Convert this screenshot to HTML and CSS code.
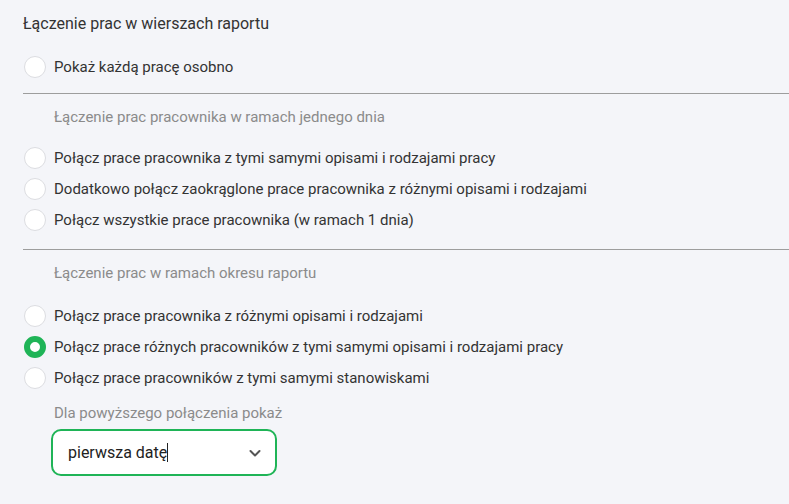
FILE: index.html
```html
<!DOCTYPE html>
<html lang="pl">
<head>
<meta charset="utf-8">
<title>Łączenie prac</title>
<link rel="stylesheet" href="styles.css">
</head>
<body>
<div class="panel">
  <div class="title">Łączenie prac w wierszach raportu</div>

  <label class="option first">
    <span class="radio"></span>
    <span class="label">Pokaż każdą pracę osobno</span>
  </label>

  <hr class="divider d1">
  <div class="subhead s1">Łączenie prac pracownika w ramach jednego dnia</div>
  <div class="group g1">
    <label class="option"><span class="radio"></span><span class="label">Połącz prace pracownika z tymi samymi opisami i rodzajami pracy</span></label>
    <label class="option"><span class="radio"></span><span class="label">Dodatkowo połącz zaokrąglone prace pracownika z różnymi opisami i rodzajami</span></label>
    <label class="option"><span class="radio"></span><span class="label">Połącz wszystkie prace pracownika (w ramach 1 dnia)</span></label>
  </div>

  <hr class="divider d2">
  <div class="subhead s2">Łączenie prac w ramach okresu raportu</div>
  <div class="group g2">
    <label class="option"><span class="radio"></span><span class="label">Połącz prace pracownika z różnymi opisami i rodzajami</span></label>
    <label class="option"><span class="radio checked"></span><span class="label">Połącz prace różnych pracowników z tymi samymi opisami i rodzajami pracy</span></label>
    <label class="option"><span class="radio"></span><span class="label">Połącz prace pracowników z tymi samymi stanowiskami</span></label>
  </div>

  <div class="subhead field-label">Dla powyższego połączenia pokaż</div>
  <div class="select">
    <span class="value">pierwsza datę<span class="caret"></span></span>
    <svg class="chevron" width="14" height="14" viewBox="0 0 14 14"><path d="M2.5 5l4.5 4.5L11.5 5" fill="none" stroke="#555" stroke-width="2" stroke-linecap="round" stroke-linejoin="round"/></svg>
  </div>
</div>
</body>
</html>
```
FILE: styles.css
```css
html, body {
  margin: 0;
  background: #f4f5f9;
}
body {
  font-family: Roboto, "Noto Sans", sans-serif;
  font-size: 15px;
  color: #333;
}
.panel {
  padding-left: 23px;
  display: flex;
  flex-direction: column;
}
.title {
  margin-top: 14px;
  line-height: 20px;
  font-size: 16px;
}
.option {
  display: flex;
  align-items: center;
  height: 31px;
  padding-left: 1px;
  gap: 8px;
}
.option.first {
  margin-top: 17px;
}
.label {
  line-height: 20px;
}
.radio {
  box-sizing: border-box;
  width: 22px;
  height: 22px;
  border-radius: 50%;
  background: #fff;
  border: 1px solid #dcdde1;
  flex: none;
}
.radio.checked {
  border: 6px solid #1fb457;
}
.divider {
  border: 0;
  border-top: 1px solid #9d9d9d;
  margin: 0;
  height: 0;
}
.d1 { margin-top: 11px; }
.d2 { margin-top: 14px; }
.subhead {
  padding-left: 31px;
  line-height: 20px;
  color: #8b8b8b;
}
.s1, .s2 { margin-top: 13px; }
.g1 { margin-top: 15px; }
.g2 { margin-top: 17px; }
.g2 .option:last-child { height: 32px; }
.field-label { margin-top: 9px; }
.select {
  box-sizing: border-box;
  margin: 6px 0 0 28px;
  width: 226px;
  height: 47px;
  border: 2px solid #1fb457;
  border-radius: 10px;
  background: #fff;
  display: flex;
  align-items: center;
  justify-content: space-between;
  padding: 0 13px 0 15px;
  color: #222;
  font-size: 16px;
}
.caret {
  display: inline-block;
  width: 1px;
  height: 19px;
  background: #222;
  vertical-align: -4px;
}
```
